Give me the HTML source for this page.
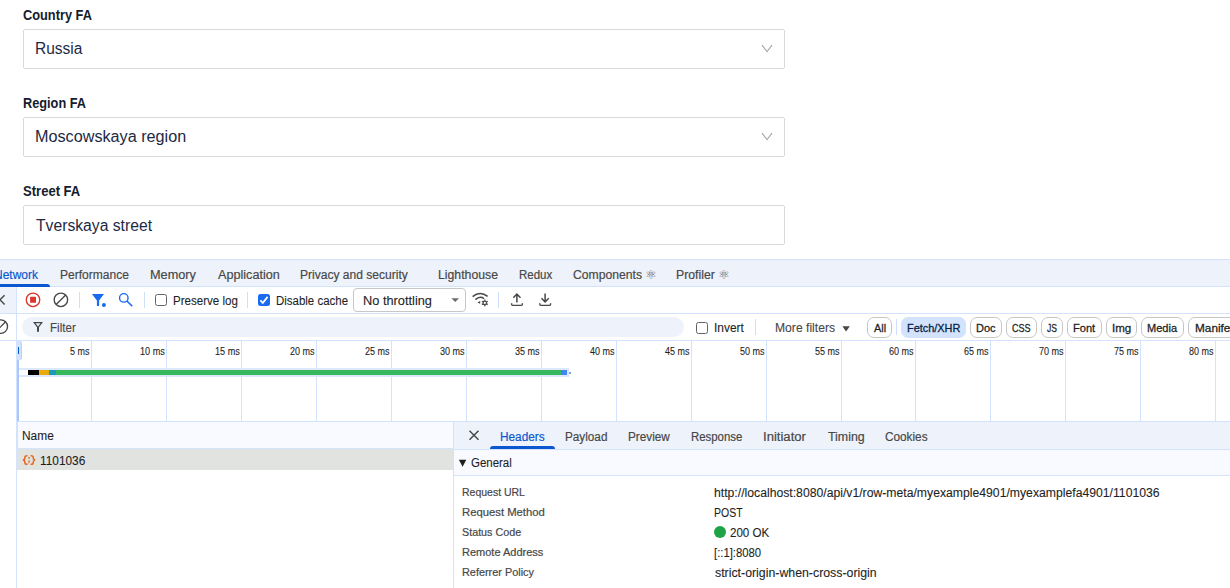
<!DOCTYPE html>
<html lang="en">
<head>
<meta charset="utf-8">
<title>Row meta example</title>
<style>
html,body{margin:0;padding:0;background:#fff}
body{width:1230px;height:588px;position:relative;overflow:hidden;font-family:"Liberation Sans",sans-serif;-webkit-font-smoothing:antialiased}
.t{position:absolute;line-height:20px;height:20px;white-space:nowrap;margin:0;padding:0;transform-origin:0 0}
.abs,.abs *{position:absolute;box-sizing:border-box}
.field{left:23px;width:762px;height:40px;border:1px solid #d9d9d9;border-radius:2px;background:#fff}
.hl{height:1px;background:#d3e3fd;left:0;width:1230px}
.vl{width:1px;background:#d3e3fd}
.chip{top:317px;height:21px;border:1px solid #c7c7c7;border-radius:7px;background:#fff}
.cb{width:12px;height:12px;border:1.2px solid #5f6368;border-radius:2.5px;background:#fff}
.sep{width:1px;background:#cfdffb}
svg{position:absolute;overflow:visible}
</style>
</head>
<body>
<!-- ================= form ================= -->
<main class="abs" style="left:0;top:0;width:1230px;height:259px">
  <div class="field" style="top:29px"></div>
  <div class="field" style="top:117px"></div>
  <div class="field" style="top:205px"></div>
  <svg style="left:761px;top:44px" width="12" height="9" viewBox="0 0 12 9"><path d="M1 1.2 L6 7.6 L11 1.2" fill="none" stroke="#a6a6a6" stroke-width="1.1"/></svg>
  <svg style="left:761px;top:132px" width="12" height="9" viewBox="0 0 12 9"><path d="M1 1.2 L6 7.6 L11 1.2" fill="none" stroke="#a6a6a6" stroke-width="1.1"/></svg>
</main>

<!-- ================= devtools ================= -->
<section class="abs" style="left:0;top:259px;width:1230px;height:329px;background:#fff">
  <!-- tab bar -->
  <div style="left:0;top:0;width:1230px;height:27px;background:#eef2fa"></div>
  <div class="hl" style="top:0"></div>
  <div class="hl" style="top:27px"></div>
  <div style="left:-20px;top:25px;width:70px;height:3px;background:#0b57d0;border-radius:3px 3px 0 0"></div>
  <!-- toolbar -->
  <div style="left:0;top:28px;width:16px;height:26px;background:#eef2fa"></div>
  <div class="hl" style="top:54px"></div>
  <!-- filter row -->
  <div class="hl" style="top:81px"></div>
  <div style="left:22px;top:58px;width:662px;height:20px;border-radius:10px;background:#eef2fa"></div>
  <!-- timeline -->
  <div class="hl" style="top:162px;left:17px"></div>
  <!-- left sidebar border -->
  <div class="vl" style="left:16px;top:28px;height:301px"></div>
</section>

<!--ICONS_START-->
<div class="abs" style="left:0;top:0;width:1230px;height:588px;pointer-events:none">
<!-- separators -->
<div class="sep" style="left:79px;top:292px;height:16px"></div>
<div class="sep" style="left:144px;top:292px;height:16px"></div>
<div class="sep" style="left:247px;top:292px;height:16px"></div>
<div class="sep" style="left:498px;top:292px;height:16px"></div>
<div class="sep" style="left:755px;top:319px;height:16px"></div>
<div class="sep" style="left:896px;top:319px;height:16px"></div>
<!-- checkboxes -->
<div class="cb" style="left:154.9px;top:293.9px"></div>
<div style="left:258px;top:293.9px;width:12px;height:12px;border-radius:2.5px;background:#1a6bf0"></div>
<svg style="left:258px;top:294px" width="12" height="12" viewBox="0 0 12 12" fill="none"><path d="M2.4 6.3 L4.8 8.8 L9.6 2.9" stroke="#fff" stroke-width="1.8"/></svg>
<div class="cb" style="left:696px;top:321.6px"></div>
<!-- select -->
<div style="left:353px;top:288px;width:113px;height:24px;border:1px solid #c7c7c7;border-radius:4px"></div>
<!-- chips -->
<div class="chip" style="left:867px;width:25px"></div>
<div class="chip" style="left:901px;width:65px;background:#d3e3fd;border-color:#d3e3fd"></div>
<div class="chip" style="left:970px;width:32px"></div>
<div class="chip" style="left:1006px;width:31px"></div>
<div class="chip" style="left:1041px;width:22px"></div>
<div class="chip" style="left:1067px;width:35px"></div>
<div class="chip" style="left:1106px;width:31px"></div>
<div class="chip" style="left:1141px;width:43px"></div>
<div class="chip" style="left:1188px;width:60px"></div>
<!-- timeline -->
<div class="vl" style="left:91px;top:341px;height:80px"></div><div class="vl" style="left:166px;top:341px;height:80px"></div><div class="vl" style="left:241px;top:341px;height:80px"></div><div class="vl" style="left:316px;top:341px;height:80px"></div><div class="vl" style="left:391px;top:341px;height:80px"></div><div class="vl" style="left:466px;top:341px;height:80px"></div><div class="vl" style="left:541px;top:341px;height:80px"></div><div class="vl" style="left:616px;top:341px;height:80px"></div><div class="vl" style="left:691px;top:341px;height:80px"></div><div class="vl" style="left:766px;top:341px;height:80px"></div><div class="vl" style="left:841px;top:341px;height:80px"></div><div class="vl" style="left:915px;top:341px;height:80px"></div><div class="vl" style="left:990px;top:341px;height:80px"></div><div class="vl" style="left:1065px;top:341px;height:80px"></div><div class="vl" style="left:1140px;top:341px;height:80px"></div><div class="vl" style="left:1215px;top:341px;height:80px"></div>
<div style="left:17px;top:341px;width:2px;height:80px;background:#a8c7fa"></div>
<div style="left:17px;top:341px;width:5px;height:18.5px;background:#d3e3fd;border-radius:0 2.5px 2.5px 0;border-right:1px solid #b9d0fb"></div>
<div style="left:17.9px;top:347px;width:1.3px;height:7px;background:#0b57d0"></div>
<div style="left:19px;top:368px;width:549.6px;height:9px;background:#dde8fd"></div>
<div style="left:19px;top:370px;width:9px;height:5px;background:#fff"></div>
<div style="left:28px;top:370px;width:11.2px;height:5px;background:#000"></div>
<div style="left:39.2px;top:370px;width:9.8px;height:5px;background:#e9ab0c"></div>
<div style="left:49px;top:370px;width:7px;height:5px;background:#1a9bbd"></div>
<div style="left:56px;top:370px;width:505.2px;height:5px;background:#36b95c"></div>
<div style="left:561.2px;top:370px;width:5.8px;height:5px;background:#4285f4"></div>
<div style="left:569.3px;top:372.3px;width:1.6px;height:1.8px;background:#4285f4;border-radius:1px"></div>
<!-- request list -->
<div style="left:17px;top:422px;width:436px;height:26px;background:#f8faff"></div>
<div class="hl" style="left:17px;top:448px;width:1213px"></div>
<div class="vl" style="left:17px;top:422px;height:26px"></div>
<div style="left:17px;top:449px;width:436px;height:21px;background:#e1e3e1"></div>
<!-- details -->
<div style="left:454px;top:422px;width:776px;height:27px;background:#eef2fa"></div>
<div class="hl" style="left:454px;top:449px;width:776px"></div>
<div style="left:454px;top:450px;width:776px;height:25px;background:#f8faff"></div>
<div class="hl" style="left:454px;top:475px;width:776px"></div>
<div style="left:490px;top:446px;width:65px;height:3px;background:#0b57d0;border-radius:3px 3px 0 0"></div>
<div class="vl" style="left:453px;top:422px;height:166px"></div>
<!-- icons -->
<svg style="left:0;top:0" width="1230" height="588" viewBox="0 0 1230 588" fill="none">
  <!-- close (cut off) -->
  <path d="M-4.6 295.2 L4.6 304.4 M4.6 295.2 L-4.6 304.4" stroke="#474747" stroke-width="1.35"/>
  <!-- block (cut off) -->
  <circle cx="0.8" cy="326.6" r="6.75" stroke="#474747" stroke-width="1.35"/>
  <path d="M-4 331.4 L5.6 321.8" stroke="#474747" stroke-width="1.35"/>
  <!-- record -->
  <circle cx="33" cy="299.8" r="6.75" stroke="#dc362e" stroke-width="1.35"/>
  <rect x="30.1" y="296.8" width="5.9" height="6" rx="0.6" fill="#dc362e"/>
  <!-- clear -->
  <circle cx="60.9" cy="299.8" r="6.75" stroke="#474747" stroke-width="1.35"/>
  <path d="M56.1 304.6 L65.7 295" stroke="#474747" stroke-width="1.35"/>
  <!-- filter funnel + dot -->
  <path d="M91.9 294.1 H104 L99.1 300.4 V306 H96.9 V300.4 Z" fill="#1a6bf0"/>
  <circle cx="103.9" cy="304.9" r="2" fill="#1a6bf0"/>
  <!-- search -->
  <circle cx="123.8" cy="297.9" r="4.25" stroke="#1a6bf0" stroke-width="1.4"/>
  <path d="M126.9 301 L132.2 306.1" stroke="#1a6bf0" stroke-width="1.5"/>
  <!-- select arrow -->
  <path d="M451.4 298.2 H459 L455.2 302 Z" fill="#6a6a6a"/>
  <!-- network conditions (wifi + gear) -->
  <path d="M472.6 296.6 Q480 290.6 487.6 296.4" stroke="#474747" stroke-width="1.5"/>
  <path d="M475.4 299.6 Q479.8 295.6 484 298.6" stroke="#474747" stroke-width="1.5"/>
  <path d="M477.4 302.4 L480.2 301 L480.2 303.8 Z" fill="#474747"/>
  <circle cx="484.8" cy="302.9" r="1.75" stroke="#474747" stroke-width="1.2"/>
  <path d="M484.80 305.00 L484.80 306.25 M482.98 303.95 L481.90 304.57 M482.98 301.85 L481.90 301.22 M484.80 300.80 L484.80 299.55 M486.62 301.85 L487.70 301.22 M486.62 303.95 L487.70 304.57" stroke="#474747" stroke-width="1.35"/>
  <!-- upload -->
  <path d="M516.9 302.5 V294.2 M513.3 297.8 L516.9 294.1 L520.5 297.8" stroke="#474747" stroke-width="1.5"/>
  <path d="M511.6 303.2 V304.3 Q511.6 305.3 512.6 305.3 H521.4 Q522.4 305.3 522.4 304.3 V303.2" stroke="#474747" stroke-width="1.35"/>
  <!-- download -->
  <path d="M545.1 293.4 V301.8 M541.5 298.3 L545.1 302 L548.7 298.3" stroke="#474747" stroke-width="1.5"/>
  <path d="M539.8 303.2 V304.3 Q539.8 305.3 540.8 305.3 H549.6 Q550.6 305.3 550.6 304.3 V303.2" stroke="#474747" stroke-width="1.35"/>
  <!-- filter outline icon -->
  <path fill-rule="evenodd" d="M33 322 H43 L39 327.3 V331.8 H37 V327.3 Z M35.5 323.3 H40.5 L38 326.5 Z" fill="#474747"/>
  <!-- more filters arrow -->
  <path d="M842.4 326.2 H849.8 L846.1 331.4 Z" fill="#474747"/>
  <!-- detail close -->
  <path d="M469.5 430.7 L478.5 439.7 M478.5 430.7 L469.5 439.7" stroke="#474747" stroke-width="1.45"/>
  <!-- general arrow -->
  <path d="M458.9 459.8 H466.3 L462.6 466.8 Z" fill="#1f1f1f"/>
  <!-- status dot -->
  <circle cx="720" cy="531.9" r="6" fill="#1ea446"/>
  <!-- request type icon -->
  <g stroke="#e9681f" stroke-width="1.5" stroke-linecap="round">
    <path d="M27 455.8 Q24.8 455.8 24.8 457.8 Q24.8 460 22.8 460 Q24.8 460 24.8 462.2 Q24.8 464.3 27 464.3"/>
    <path d="M31.1 455.8 Q33.3 455.8 33.3 457.8 Q33.3 460 35.3 460 Q33.3 460 33.3 462.2 Q33.3 464.3 31.1 464.3"/>
  </g>
  <rect x="28.3" y="457" width="1.6" height="1.7" fill="#e9681f"/>
  <path d="M28.3 460.6 H29.9 V462 L28.8 463.6 H28.1 L28.6 462 Z" fill="#e9681f"/>
</svg>
</div>
<!--ICONS_END-->
<span class="t" style="left:23.00px;top:5.15px;font-size:14px;transform:scaleX(0.9135);color:#151c2e;font-weight:700">Country FA</span>
<span class="t" style="left:35.00px;top:39.46px;font-size:16px;transform:scaleX(0.9686);color:#1d2944">Russia</span>
<span class="t" style="left:23.00px;top:93.15px;font-size:14px;transform:scaleX(0.9102);color:#151c2e;font-weight:700">Region FA</span>
<span class="t" style="left:35.00px;top:127.46px;font-size:16px;transform:scaleX(1.0122);color:#1d2944">Moscowskaya region</span>
<span class="t" style="left:23.00px;top:181.15px;font-size:14px;transform:scaleX(0.9322);color:#151c2e;font-weight:700">Street FA</span>
<span class="t" style="left:36.00px;top:216.46px;font-size:16px;transform:scaleX(0.9811);color:#1d2944">Tverskaya street</span>
<span class="t" style="left:-6.00px;top:264.84px;font-size:12px;transform:scaleX(0.9988);color:#0b57d0;-webkit-text-stroke:0.18px #0b57d0">Network</span>
<span class="t" style="left:60.00px;top:264.84px;font-size:12px;transform:scaleX(1.0037);color:#474747;-webkit-text-stroke:0.18px #474747">Performance</span>
<span class="t" style="left:150.00px;top:264.84px;font-size:12px;transform:scaleX(1.0586);color:#474747;-webkit-text-stroke:0.18px #474747">Memory</span>
<span class="t" style="left:218.00px;top:264.84px;font-size:12px;transform:scaleX(1.0527);color:#474747;-webkit-text-stroke:0.18px #474747">Application</span>
<span class="t" style="left:300.00px;top:264.84px;font-size:12px;transform:scaleX(1.0043);color:#474747;-webkit-text-stroke:0.18px #474747">Privacy and security</span>
<span class="t" style="left:438.00px;top:264.84px;font-size:12px;transform:scaleX(1.0215);color:#474747;-webkit-text-stroke:0.18px #474747">Lighthouse</span>
<span class="t" style="left:519.00px;top:264.84px;font-size:12px;transform:scaleX(0.9577);color:#474747;-webkit-text-stroke:0.18px #474747">Redux</span>
<span class="t" style="left:573.00px;top:264.84px;font-size:12px;transform:scaleX(1.0139);color:#474747;-webkit-text-stroke:0.18px #474747">Components</span>
<span class="t" style="left:676.00px;top:264.84px;font-size:12px;transform:scaleX(1.0196);color:#474747;-webkit-text-stroke:0.18px #474747">Profiler</span>
<span class="t" style="left:645.00px;top:264.97px;font-size:12.5px;transform:scaleX(1.0624);color:#5d626b;font-family:'DejaVu Sans',sans-serif">⚛</span>
<span class="t" style="left:718.00px;top:264.97px;font-size:12.5px;transform:scaleX(1.0624);color:#5d626b;font-family:'DejaVu Sans',sans-serif">⚛</span>
<span class="t" style="left:173.00px;top:290.84px;font-size:12px;transform:scaleX(0.9634);color:#1f1f1f;-webkit-text-stroke:0.1px #1f1f1f">Preserve log</span>
<span class="t" style="left:276.00px;top:290.84px;font-size:12px;transform:scaleX(0.9555);color:#1f1f1f;-webkit-text-stroke:0.1px #1f1f1f">Disable cache</span>
<span class="t" style="left:363.00px;top:290.84px;font-size:12px;transform:scaleX(1.0660);color:#1f1f1f;-webkit-text-stroke:0.1px #1f1f1f">No throttling</span>
<span class="t" style="left:50.00px;top:317.84px;font-size:12px;transform:scaleX(0.9650);color:#474747;-webkit-text-stroke:0.1px #474747">Filter</span>
<span class="t" style="left:714.00px;top:317.84px;font-size:12px;transform:scaleX(0.9946);color:#1f1f1f;-webkit-text-stroke:0.1px #1f1f1f">Invert</span>
<span class="t" style="left:775.00px;top:317.84px;font-size:12px;transform:scaleX(1.0115);color:#474747;-webkit-text-stroke:0.1px #474747">More filters</span>
<span class="t" style="left:874.00px;top:318.12px;font-size:11.2px;transform:scaleX(0.9694);color:#1f1f1f;-webkit-text-stroke:0.28px #1f1f1f">All</span>
<span class="t" style="left:907.00px;top:318.12px;font-size:11.2px;transform:scaleX(0.9759);color:#041e49;-webkit-text-stroke:0.28px #041e49">Fetch/XHR</span>
<span class="t" style="left:976.00px;top:318.12px;font-size:11.2px;transform:scaleX(0.9828);color:#1f1f1f;-webkit-text-stroke:0.28px #1f1f1f">Doc</span>
<span class="t" style="left:1012.00px;top:318.12px;font-size:11.2px;transform:scaleX(0.8097);color:#1f1f1f;-webkit-text-stroke:0.28px #1f1f1f">CSS</span>
<span class="t" style="left:1047.00px;top:318.12px;font-size:11.2px;transform:scaleX(0.7623);color:#1f1f1f;-webkit-text-stroke:0.28px #1f1f1f">JS</span>
<span class="t" style="left:1073.00px;top:318.12px;font-size:11.2px;transform:scaleX(0.9910);color:#1f1f1f;-webkit-text-stroke:0.28px #1f1f1f">Font</span>
<span class="t" style="left:1112.00px;top:318.12px;font-size:11.2px;transform:scaleX(1.0340);color:#1f1f1f;-webkit-text-stroke:0.28px #1f1f1f">Img</span>
<span class="t" style="left:1147.00px;top:318.12px;font-size:11.2px;transform:scaleX(0.9867);color:#1f1f1f;-webkit-text-stroke:0.28px #1f1f1f">Media</span>
<span class="t" style="left:1195.00px;top:318.12px;font-size:11.2px;transform:scaleX(1.0539);color:#1f1f1f;-webkit-text-stroke:0.28px #1f1f1f">Manifest</span>
<span class="t" style="left:70.00px;top:341.54px;font-size:10px;transform:scaleX(0.8943);color:#1f1f1f;-webkit-text-stroke:0.1px #1f1f1f">5 ms</span>
<span class="t" style="left:140.00px;top:341.54px;font-size:10px;transform:scaleX(0.9113);color:#1f1f1f;-webkit-text-stroke:0.1px #1f1f1f">10 ms</span>
<span class="t" style="left:215.00px;top:341.54px;font-size:10px;transform:scaleX(0.9113);color:#1f1f1f;-webkit-text-stroke:0.1px #1f1f1f">15 ms</span>
<span class="t" style="left:290.00px;top:341.54px;font-size:10px;transform:scaleX(0.8994);color:#1f1f1f;-webkit-text-stroke:0.1px #1f1f1f">20 ms</span>
<span class="t" style="left:365.00px;top:341.54px;font-size:10px;transform:scaleX(0.8994);color:#1f1f1f;-webkit-text-stroke:0.1px #1f1f1f">25 ms</span>
<span class="t" style="left:440.00px;top:341.54px;font-size:10px;transform:scaleX(0.9022);color:#1f1f1f;-webkit-text-stroke:0.1px #1f1f1f">30 ms</span>
<span class="t" style="left:515.00px;top:341.54px;font-size:10px;transform:scaleX(0.9022);color:#1f1f1f;-webkit-text-stroke:0.1px #1f1f1f">35 ms</span>
<span class="t" style="left:590.00px;top:341.54px;font-size:10px;transform:scaleX(0.8959);color:#1f1f1f;-webkit-text-stroke:0.1px #1f1f1f">40 ms</span>
<span class="t" style="left:665.00px;top:341.54px;font-size:10px;transform:scaleX(0.8959);color:#1f1f1f;-webkit-text-stroke:0.1px #1f1f1f">45 ms</span>
<span class="t" style="left:740.00px;top:341.54px;font-size:10px;transform:scaleX(0.9019);color:#1f1f1f;-webkit-text-stroke:0.1px #1f1f1f">50 ms</span>
<span class="t" style="left:815.00px;top:341.54px;font-size:10px;transform:scaleX(0.9019);color:#1f1f1f;-webkit-text-stroke:0.1px #1f1f1f">55 ms</span>
<span class="t" style="left:889.00px;top:341.54px;font-size:10px;transform:scaleX(0.9019);color:#1f1f1f;-webkit-text-stroke:0.1px #1f1f1f">60 ms</span>
<span class="t" style="left:964.00px;top:341.54px;font-size:10px;transform:scaleX(0.9019);color:#1f1f1f;-webkit-text-stroke:0.1px #1f1f1f">65 ms</span>
<span class="t" style="left:1039.00px;top:341.54px;font-size:10px;transform:scaleX(0.9041);color:#1f1f1f;-webkit-text-stroke:0.1px #1f1f1f">70 ms</span>
<span class="t" style="left:1114.00px;top:341.54px;font-size:10px;transform:scaleX(0.9041);color:#1f1f1f;-webkit-text-stroke:0.1px #1f1f1f">75 ms</span>
<span class="t" style="left:1189.00px;top:341.54px;font-size:10px;transform:scaleX(0.8987);color:#1f1f1f;-webkit-text-stroke:0.1px #1f1f1f">80 ms</span>
<span class="t" style="left:22.00px;top:425.84px;font-size:12px;transform:scaleX(0.9937);color:#1f1f1f;-webkit-text-stroke:0.1px #1f1f1f">Name</span>
<span class="t" style="left:40.00px;top:451.24px;font-size:12px;transform:scaleX(0.9868);color:#1f1f1f;-webkit-text-stroke:0.1px #1f1f1f">1101036</span>
<span class="t" style="left:500.00px;top:426.84px;font-size:12px;transform:scaleX(0.9826);color:#0b57d0;-webkit-text-stroke:0.18px #0b57d0">Headers</span>
<span class="t" style="left:565.00px;top:426.84px;font-size:12px;transform:scaleX(0.9779);color:#474747;-webkit-text-stroke:0.18px #474747">Payload</span>
<span class="t" style="left:628.00px;top:426.84px;font-size:12px;transform:scaleX(0.9792);color:#474747;-webkit-text-stroke:0.18px #474747">Preview</span>
<span class="t" style="left:691.00px;top:426.84px;font-size:12px;transform:scaleX(0.9504);color:#474747;-webkit-text-stroke:0.18px #474747">Response</span>
<span class="t" style="left:763.00px;top:426.84px;font-size:12px;transform:scaleX(1.0902);color:#474747;-webkit-text-stroke:0.18px #474747">Initiator</span>
<span class="t" style="left:828.00px;top:426.84px;font-size:12px;transform:scaleX(1.0318);color:#474747;-webkit-text-stroke:0.18px #474747">Timing</span>
<span class="t" style="left:885.00px;top:426.84px;font-size:12px;transform:scaleX(0.9812);color:#474747;-webkit-text-stroke:0.18px #474747">Cookies</span>
<span class="t" style="left:471.00px;top:452.54px;font-size:12px;transform:scaleX(0.9551);color:#1f1f1f;-webkit-text-stroke:0.1px #1f1f1f">General</span>
<span class="t" style="left:462.00px;top:482.19px;font-size:11px;transform:scaleX(0.9532);color:#474747;-webkit-text-stroke:0.2px #474747">Request URL</span>
<span class="t" style="left:462.00px;top:502.19px;font-size:11px;transform:scaleX(1.0259);color:#474747;-webkit-text-stroke:0.2px #474747">Request Method</span>
<span class="t" style="left:462.00px;top:522.19px;font-size:11px;transform:scaleX(0.9774);color:#474747;-webkit-text-stroke:0.2px #474747">Status Code</span>
<span class="t" style="left:462.00px;top:542.19px;font-size:11px;transform:scaleX(1.0003);color:#474747;-webkit-text-stroke:0.2px #474747">Remote Address</span>
<span class="t" style="left:462.00px;top:562.19px;font-size:11px;transform:scaleX(0.9891);color:#474747;-webkit-text-stroke:0.2px #474747">Referrer Policy</span>
<span class="t" style="left:714.00px;top:482.84px;font-size:12px;transform:scaleX(1.0172);color:#1f1f1f;-webkit-text-stroke:0.1px #1f1f1f">http://localhost:8080/api/v1/row-meta/myexample4901/myexamplefa4901/1101036</span>
<span class="t" style="left:714.00px;top:502.84px;font-size:12px;transform:scaleX(0.8742);color:#1f1f1f;-webkit-text-stroke:0.1px #1f1f1f">POST</span>
<span class="t" style="left:730.00px;top:522.84px;font-size:12px;transform:scaleX(0.9644);color:#1f1f1f;-webkit-text-stroke:0.1px #1f1f1f">200 OK</span>
<span class="t" style="left:714.00px;top:542.84px;font-size:12px;transform:scaleX(0.9410);color:#1f1f1f;-webkit-text-stroke:0.1px #1f1f1f">[::1]:8080</span>
<span class="t" style="left:715.00px;top:562.84px;font-size:12px;transform:scaleX(1.0275);color:#1f1f1f;-webkit-text-stroke:0.1px #1f1f1f">strict-origin-when-cross-origin</span>
</body>
</html>
